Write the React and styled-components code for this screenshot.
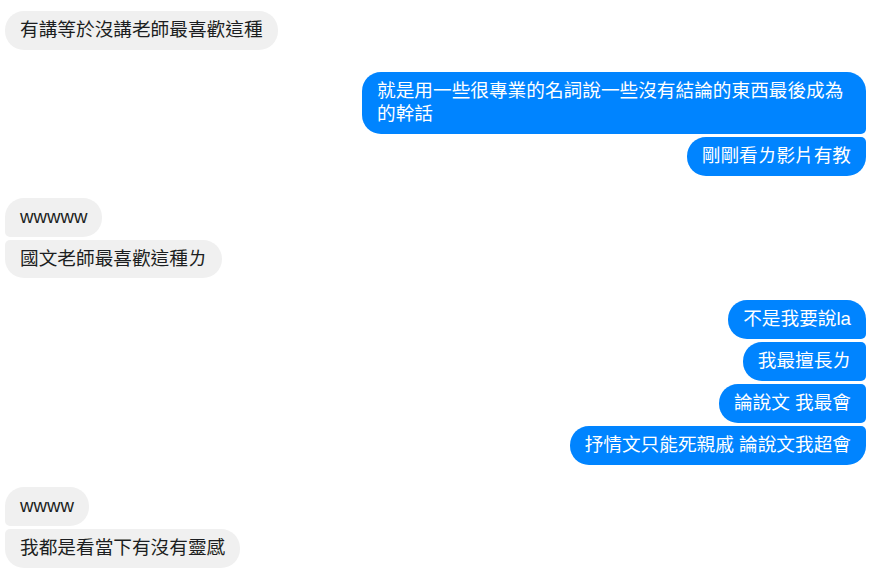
import React from 'react';
import styled, { createGlobalStyle, css } from 'styled-components';

const GlobalStyle = createGlobalStyle`
  body {
    margin: 0;
    background: #ffffff;
    font-family: "Liberation Sans", "Noto Sans CJK TC", sans-serif;
  }
`;

const Thread = styled.div`
  display: flex;
  flex-direction: column;
  gap: 22px;
  padding: 11px 17px 0 5px;
`;

const Group = styled.div`
  align-items: ${(p) => (p.$mine ? 'flex-end' : 'flex-start')};
  display: flex;
  flex-direction: column;
  gap: 3px;
`;

const big = '19px';
const small = '5px';

// outer corners are always round, the corners facing the rest of the group are tight
const inner = {
  single: [big, big],
  first: [big, small],
  middle: [small, small],
  last: [small, big],
};

const Bubble = styled.div`
  box-sizing: border-box;
  font-size: 18.67px;
  line-height: 22.9px;
  max-width: 504px;
  padding: 8px 15px;
  ${(p) => {
    const [top, bottom] = inner[p.$pos];
    return p.$mine
      ? css`
          background: #0084ff;
          color: #ffffff;
          border-radius: ${big} ${top} ${bottom} ${big};
        `
      : css`
          background: #f0f0f0;
          color: #1c1e21;
          border-radius: ${top} ${big} ${big} ${bottom};
        `;
  }}
`;

const conversation = [
  { mine: false, lines: ['有講等於沒講老師最喜歡這種'] },
  {
    mine: true,
    lines: ['就是用一些很專業的名詞說一些沒有結論的東西最後成為的幹話', '剛剛看ㄌ影片有教'],
  },
  { mine: false, lines: ['wwwww', '國文老師最喜歡這種ㄌ'] },
  {
    mine: true,
    lines: ['不是我要說la', '我最擅長ㄌ', '論說文 我最會', '抒情文只能死親戚 論說文我超會'],
  },
  { mine: false, lines: ['wwww', '我都是看當下有沒有靈感'] },
];

const position = (i, n) => {
  if (n === 1) return 'single';
  if (i === 0) return 'first';
  if (i === n - 1) return 'last';
  return 'middle';
};

const App = () => {
  return (
    <>
      <GlobalStyle />
      <Thread>
        {conversation.map((group, g) => (
          <Group key={g} $mine={group.mine}>
            {group.lines.map((text, i) => (
              <Bubble key={i} $mine={group.mine} $pos={position(i, group.lines.length)}>
                {text}
              </Bubble>
            ))}
          </Group>
        ))}
      </Thread>
    </>
  );
};

export default App;
